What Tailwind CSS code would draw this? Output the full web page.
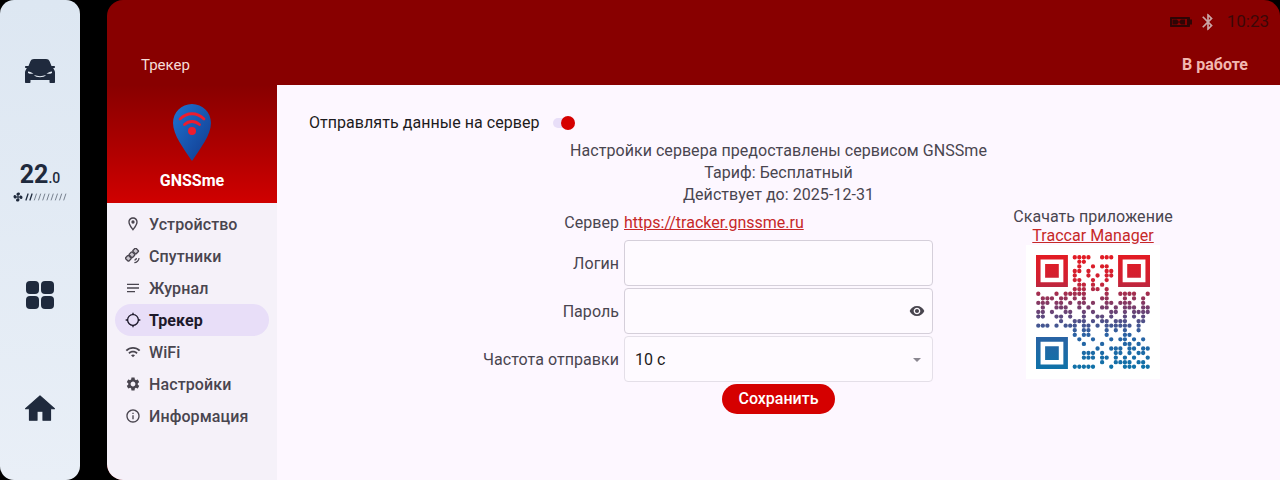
<!DOCTYPE html>
<html lang="ru">
<head>
<meta charset="utf-8">
<script src="https://cdn.jsdelivr.net/npm/@tailwindcss/browser@4"></script>
</head>
<body class="m-0 bg-black">
<div class="flex h-[480px] w-[1280px] overflow-hidden bg-black font-['Roboto','Liberation_Sans',sans-serif]">
  <aside class="grid h-full w-20 shrink-0 grid-rows-4 rounded-[14px] bg-gradient-to-b from-[#dde7f2] to-[#e9eff7] py-[14px] text-[#1f2a3d]">
    <div class="flex items-center justify-center">
      <svg width="30" height="24" viewBox="0 0 30 24" fill="currentColor"><path d="M9 0h12c1.800 0 3 .8 3.700 2.500L26.500 7H29c.6 0 1 .4 1 1s-.4 1-1 1h-.8l1.300 2.500c.3.600.5 1.300.5 2V23c0 .6-.4 1-1 1h-3.500c-.6 0-1-.4-1-1v-2H5.500v2c0 .6-.4 1-1 1H1c-.6 0-1-.4-1-1v-9.500c0-.7.2-1.400.5-2L1.800 9H1c-.6 0-1-.4-1-1s.4-1 1-1h2.500l1.800-4.500C6 .8 7.200 0 9 0z"/><path fill="#e6edf5" d="M3 12.500c2 .3 4 1 5.500 2.200-2 .3-4 .1-5.500-.7zM27 12.500c-2 .3-4 1-5.500 2.200 2 .3 4 .1 5.500-.7zM9 16c4 1.500 8 1.500 12 0-2 3-10 3-12 0z"/></svg>
    </div>
    <div class="flex flex-col items-center justify-start pt-[35px]">
      <div class="flex h-[26px] items-baseline leading-none"><span class="text-[25px] font-bold">22</span><span class="text-[14px] font-medium">.0</span></div>
      <svg class="mt-[4px]" width="54" height="10" viewBox="0 0 54 10">
        <g fill="#1f2a3d"><circle cx="5" cy="5" r="1.100"/><path d="M5 4C3.500 3.500 3 2 4 1s3-.5 3 .8C7 3 6 3.500 5 4zM6 5c.5-1.500 2-2 3-1s.5 3-.8 3C7 7 6.500 6 6 5zM5 6c1.500.5 2 2 1 3s-3 .5-3-.8C3 7 4 6.500 5 6zM4 5C3.500 6.500 2 7 1 6s-.5-3 .8-3C3 3 3.500 4 4 5z"/></g>
        <g fill="none" stroke-linecap="round" stroke="#1f2a3d" stroke-width="1.300"><path d="M13 8l2-6M17 8l2-6"/></g>
        <g fill="none" stroke-linecap="round" stroke="#5d6675" stroke-width=".8"><path d="M21.400 8l2-6M25.600 8l2-6M29.800 8l2-6M34 8l2-6M38.200 8l2-6M42.400 8l2-6M46.600 8l2-6M50.800 8l2-6"/></g>
      </svg>
    </div>
    <div class="flex items-center justify-center pb-[4px]">
      <div class="grid grid-cols-2 gap-[2px]"><span class="size-[13px] rounded-[4px] bg-[#1f2a3d]"></span><span class="size-[13px] rounded-[4px] bg-[#1f2a3d]"></span><span class="size-[13px] rounded-[4px] bg-[#1f2a3d]"></span><span class="size-[13px] rounded-[4px] bg-[#1f2a3d]"></span></div>
    </div>
    <div class="flex items-center justify-center pb-[4px]">
      <svg width="30" height="28" viewBox="2 3 20 17" fill="currentColor" stroke="currentColor" stroke-width=".8" stroke-linejoin="round"><path d="M10 19.600v-6h4v6h5v-7.600h2.600L12 3.500 2.400 12H5v7.600z"/></svg>
    </div>
  </aside>

  <main class="ml-[27px] flex h-full flex-1 flex-col overflow-hidden rounded-l-[16px] rounded-tr-[16px] bg-[#880000]">
    <header class="flex h-[85px] shrink-0 flex-col pr-[32px] pl-[34px]">
      <div class="-mr-[21px] flex h-[44px] items-center justify-end">
        <svg width="22" height="10" viewBox="0 0 22 10" class="mr-[6px]"><path fill="#2e0505" d="M1 0h18c.6 0 1 .4 1 1v1.500h2v5h-2V9c0 .6-.4 1-1 1H1c-.6 0-1-.4-1-1V1c0-.6.4-1 1-1z"/><path fill="#880000" d="M2 2h15v6H2z"/><path fill="#2e0505" d="M2.500 2.500h4.500l2 2.500 2-2.500h4v5h-4l-2-2.500-2 2.500H2.500z"/></svg>
        <svg width="20" height="20" viewBox="0 0 24 24" fill="#c9a6a6" class="mr-[9px]"><path d="M17.710 7.710L12 2h-1v7.590L6.410 5 5 6.410 10.590 12 5 17.590 6.410 19 11 14.410V22h1l5.710-5.710-4.300-4.290 4.300-4.290zM13 5.830l1.880 1.880L13 9.590V5.830zm1.880 10.460L13 18.170v-3.760l1.880 1.880z"/></svg>
        <span class="text-[17px] leading-none text-[#3b0808]">10:23</span>
      </div>
      <div class="flex h-[42px] items-center justify-between pt-[2px]">
        <span class="text-[15px] text-[#f6dcd8]">Трекер</span>
        <span class="text-[16px] font-bold text-[#f2b8b0]">В работе</span>
      </div>
    </header>

    <div class="flex min-h-0 flex-1">
      <nav class="flex w-[170px] shrink-0 flex-col bg-[#f5f1f9]">
        <div class="flex h-[118px] flex-col items-center bg-gradient-to-b from-[#880000] to-[#d00000] pt-[19px]">
          <svg width="38" height="57" viewBox="0 0 38 57">
            <defs><linearGradient id="pin" x1="0" y1="0" x2="1" y2="1"><stop offset="0" stop-color="#1e73d2"/><stop offset="1" stop-color="#12398c"/></linearGradient></defs>
            <path fill="url(#pin)" d="M19 0c10.500 0 19 8.500 19 19 0 12-11 26-19 38C11 45 0 31 0 19 0 8.500 8.500 0 19 0z"/>
            <path fill="none" stroke="#ee1c2e" stroke-width="2.800" stroke-linecap="round" d="M7 15c7-7 17-7 24 0M11.500 20.500c4.500-4 10.500-4 15 0"/>
            <circle cx="19" cy="27" r="4" fill="#ee1c2e"/>
          </svg>
          <span class="mt-[10px] text-[16px] leading-[20px] font-bold text-white">GNSSme</span>
        </div>
        <ul class="flex flex-col px-[8px] pt-[5px] text-[16px] font-medium tracking-[0.1px] text-[#49454f]">
          <li class="flex h-8 items-center gap-[8px] rounded-full pl-[10px]"><svg width="16" height="16" viewBox="0 0 24 24" fill="currentColor"><path d="M12 2C8.130 2 5 5.130 5 9c0 5.250 7 13 7 13s7-7.750 7-13c0-3.870-3.130-7-7-7zM7 9c0-2.760 2.240-5 5-5s5 2.240 5 5c0 2.880-2.880 7.190-5 9.880C9.920 16.210 7 11.850 7 9z"/><circle cx="12" cy="9" r="2.500"/></svg><span class="pt-[2px]">Устройство</span></li>
          <li class="flex h-8 items-center gap-[8px] rounded-full pl-[10px]"><svg width="16" height="16" viewBox="0 0 24 24" fill="none" stroke="currentColor" stroke-width="2"><g transform="translate(-1.500 -2) rotate(-45 12 12)"><rect x="1" y="8.500" width="6.500" height="7" rx="1.500" fill="currentColor" fill-opacity=".25"/><rect x="8.700" y="8.500" width="6.500" height="7" rx="1.500" fill="currentColor" fill-opacity=".25"/><rect x="16.500" y="8.500" width="6.500" height="7" rx="1.500" fill="currentColor" fill-opacity=".25"/></g><path stroke-width="1.800" d="M14 22c3.500 0 7-3.500 7-7M14 18c1.500 0 3-1.500 3-3"/></svg><span class="pt-[2px]">Спутники</span></li>
          <li class="flex h-8 items-center gap-[8px] rounded-full pl-[10px]"><svg width="16" height="16" viewBox="0 0 24 24" fill="currentColor"><path d="M3 5.500h18v2H3zM3 11h18v2H3zM3 16.500h12v2H3z"/></svg><span class="pt-[2px]">Журнал</span></li>
          <li class="flex h-8 items-center gap-[8px] rounded-full bg-[#e8def8] pl-[10px] font-bold text-[#1d192b]"><svg width="16" height="16" viewBox="0 0 24 24" fill="currentColor"><path d="M20.940 11c-.460-4.170-3.770-7.480-7.940-7.940V1h-2v2.060C6.830 3.520 3.520 6.830 3.060 11H1v2h2.060c.460 4.170 3.770 7.480 7.940 7.940V23h2v-2.060c4.170-.460 7.480-3.770 7.940-7.940H23v-2h-2.060zM12 19c-3.870 0-7-3.130-7-7s3.130-7 7-7 7 3.130 7 7-3.130 7-7 7z"/></svg><span class="pt-[2px]">Трекер</span></li>
          <li class="flex h-8 items-center gap-[8px] rounded-full pl-[10px]"><svg width="16" height="16" viewBox="0 0 24 24" fill="currentColor"><path d="M1 9l2 2c4.970-4.970 13.030-4.970 18 0l2-2C16.930 2.930 7.080 2.930 1 9zm8 8l3 3 3-3c-1.650-1.660-4.340-1.660-6 0zm-4-4l2 2c2.760-2.760 7.240-2.760 10 0l2-2C15.140 9.140 8.870 9.140 5 13z"/></svg><span class="pt-[2px]">WiFi</span></li>
          <li class="flex h-8 items-center gap-[8px] rounded-full pl-[10px]"><svg width="16" height="16" viewBox="0 0 24 24" fill="currentColor"><path d="M19.140 12.940c.040-.3.060-.610.060-.940 0-.320-.020-.640-.070-.940l2.030-1.580c.180-.140.230-.410.120-.610l-1.920-3.320c-.120-.220-.370-.290-.590-.220l-2.390.960c-.5-.380-1.030-.7-1.620-.940l-.360-2.540c-.040-.240-.240-.410-.480-.410h-3.840c-.240 0-.430.170-.470.410l-.360 2.540c-.590.240-1.130.570-1.620.940l-2.390-.960c-.220-.080-.470 0-.590.220L2.740 8.870c-.120.210-.080.470.120.610l2.030 1.580c-.050.3-.090.630-.090.940s.020.640.07.940l-2.030 1.580c-.180.140-.230.410-.12.610l1.920 3.320c.120.220.370.290.590.220l2.390-.960c.5.380 1.030.7 1.620.94l.36 2.540c.050.240.240.410.48.410h3.840c.240 0 .440-.17.470-.41l.36-2.540c.590-.240 1.130-.56 1.620-.94l2.39.96c.22.08.47 0 .59-.22l1.920-3.320c.12-.22.07-.47-.12-.61l-2.010-1.58zM12 15.600c-1.980 0-3.600-1.620-3.600-3.600s1.620-3.600 3.600-3.600 3.600 1.620 3.600 3.600-1.620 3.600-3.600 3.600z"/></svg><span class="pt-[2px]">Настройки</span></li>
          <li class="flex h-8 items-center gap-[8px] rounded-full pl-[10px]"><svg width="16" height="16" viewBox="0 0 24 24" fill="currentColor"><path d="M11 7h2v2h-2zm0 4h2v6h-2zm1-9C6.480 2 2 6.480 2 12s4.480 10 10 10 10-4.480 10-10S17.520 2 12 2zm0 18c-4.410 0-8-3.590-8-8s3.590-8 8-8 8 3.590 8 8-3.590 8-8 8z"/></svg><span class="pt-[2px]">Информация</span></li>
        </ul>
      </nav>

      <section class="flex min-w-0 flex-1 flex-col bg-[#fdf7ff] px-[32px] pt-[24px] text-[16px] tracking-[0.05px] text-[#49454f]">
        <div class="flex h-[28px] items-center">
          <span class="text-[#1d1b20]">Отправлять данные на сервер</span>
          <span class="relative ml-[13px] h-[10px] w-[22px] rounded-full bg-[#e8def8]"><span class="absolute top-[-2px] right-0 size-[14px] rounded-full bg-[#d50000]"></span></span>
        </div>
        <div class="mt-[3px] flex flex-col items-center text-center leading-[22px]">
          <p>Настройки сервера предоставлены сервисом GNSSme</p>
          <p>Тариф: Бесплатный</p>
          <p>Действует до: 2025-12-31</p>
        </div>
        <div class="grid grid-cols-[315px_309px_315px]">
          <div class="flex h-[34px] items-center justify-end pr-[5px]">Сервер</div>
          <div class="flex h-[34px] items-center"><a class="tracking-normal text-[#c62828] underline" href="#">https://tracker.gnssme.ru</a></div>
          <div class="row-span-5 flex flex-col items-center pl-[5px] leading-[18px]">
            <p class="pt-[2px] text-[#49454f]">Скачать приложение</p>
            <a class="mt-[1px] text-[#c62828] underline" href="#">Traccar Manager</a>
            <div class="bg-white p-[10px]">
              <svg width="114" height="114" viewBox="0 0 25 25" class="block">
                <defs><linearGradient id="qr" gradientUnits="userSpaceOnUse" x1="0" y1="0" x2="0" y2="25"><stop offset="0" stop-color="#e31b23"/><stop offset=".22" stop-color="#d02032"/><stop offset=".45" stop-color="#7a3c6a"/><stop offset=".7" stop-color="#2a62a4"/><stop offset="1" stop-color="#0f72a8"/></linearGradient></defs>
                <path fill="url(#qr)" fill-rule="evenodd" d="M0 0h7v7H0zM1 1v5h5V1zM2 2h3v3H2zM18 0h7v7h-7zM19 1v5h5V1zM20 2h3v3h-3zM0 18h7v7H0zM1 19v5h5v-5zM2 20h3v3H2z"/>
                <path id="dots" fill="none" stroke="url(#qr)" stroke-width=".95" stroke-linecap="round" d=""/>
              </svg>
              <script>
                (function () {
                  var rows = [
                    "........111100111........",
                    "........011000000........",
                    "........010010110........",
                    "........110100011........",
                    "........100101011........",
                    "........110010010........",
                    "........011010100........",
                    "........111011010........",
                    "1000101111100001001111001",
                    "0111011010100011000101010",
                    "1110110101101001101110010",
                    "0100111001010011010111011",
                    "1101001100101000110101111",
                    "1100110100100110100101010",
                    "0000010011101011011100110",
                    "1110101110110101111110100",
                    "0000000010110001010100100",
                    "........10110001000110000",
                    "........01001000101101010",
                    "........00100010000110100",
                    "........00000100111011011",
                    "........00111010011010110",
                    "........00111011010101001",
                    "........00000010011110110",
                    "........11111000100111011"
                  ];
                  var d = "";
                  rows.forEach(function (r, y) {
                    r.split("").forEach(function (c, x) {
                      if (c === "1") d += "M" + (x + 0.5) + " " + (y + 0.5) + "h0";
                    });
                  });
                  document.getElementById("dots").setAttribute("d", d);
                })();
              </script>
            </div>
          </div>

          <div class="flex h-[46px] items-center justify-end pt-[2px] pr-[5px]">Логин</div>
          <div class="h-[46px] rounded-[4px] border-[1.5px] border-[#d5cfda] bg-[#fefaff]"></div>

          <div class="mt-[2px] flex h-[46px] items-center justify-end pt-[2px] pr-[5px]">Пароль</div>
          <div class="mt-[2px] flex h-[46px] items-center justify-end rounded-[4px] border-[1.5px] border-[#d5cfda] bg-[#fefaff] pr-[7px]">
            <svg width="16" height="16" viewBox="0 0 24 24" fill="#49454f"><path d="M12 4.500C7 4.500 2.730 7.610 1 12c1.730 4.390 6 7.500 11 7.500s9.270-3.110 11-7.500c-1.730-4.390-6-7.500-11-7.500zM12 17c-2.760 0-5-2.240-5-5s2.240-5 5-5 5 2.240 5 5-2.240 5-5 5zm0-8c-1.660 0-3 1.340-3 3s1.340 3 3 3 3-1.340 3-3-1.340-3-3-3z"/></svg>
          </div>

          <div class="mt-[2px] flex h-[46px] items-center justify-end pt-[2px] pr-[5px]">Частота отправки</div>
          <div class="mt-[2px] flex h-[46px] items-center justify-between rounded-[4px] border border-[#e4dfe8] bg-[#fefaff] pt-[2px] pr-[11px] pl-[10px] text-[#1d1b20]">
            <span>10 с</span>
            <svg width="8" height="4" viewBox="0 0 8 4" fill="#8a8690"><path d="M0 0h8L4 4z"/></svg>
          </div>

          <div></div>
          <div class="mt-[2px] flex justify-center">
            <button class="h-[30px] w-[113px] rounded-full bg-[#d50000] text-[16px] font-medium tracking-normal text-white">Сохранить</button>
          </div>
        </div>
      </section>
    </div>
  </main>
</div>
</body>
</html>
